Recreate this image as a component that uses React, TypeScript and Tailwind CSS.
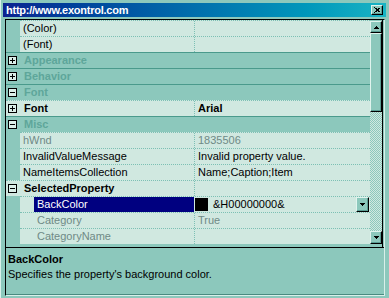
const FONT = "font-['Liberation_Sans',Arial,sans-serif]";

type Item =
  | { t: "cat"; name: string; open: boolean }
  | { t: "grp"; name: string; value?: string; open: boolean }
  | {
      t: "prop";
      name: string;
      value?: string;
      lvl: 1 | 2;
      gray?: boolean;
      sel?: boolean;
      swatch?: boolean;
    };

const rows: Item[] = [
  { t: "prop", name: "(Color)", lvl: 1 },
  { t: "prop", name: "(Font)", lvl: 1 },
  { t: "cat", name: "Appearance", open: false },
  { t: "cat", name: "Behavior", open: false },
  { t: "cat", name: "Font", open: true },
  { t: "grp", name: "Font", value: "Arial", open: false },
  { t: "cat", name: "Misc", open: true },
  { t: "prop", name: "hWnd", value: "1835506", lvl: 1, gray: true },
  { t: "prop", name: "InvalidValueMessage", value: "Invalid property value.", lvl: 1 },
  { t: "prop", name: "NameItemsCollection", value: "Name;Caption;Item", lvl: 1 },
  { t: "grp", name: "SelectedProperty", open: true },
  { t: "prop", name: "BackColor", value: "&H00000000&", lvl: 2, sel: true, swatch: true },
  { t: "prop", name: "Category", value: "True", lvl: 2, gray: true },
  { t: "prop", name: "CategoryName", lvl: 2, gray: true },
];

function Box({ open }: { open: boolean }) {
  return (
    <div className="w-[9px] h-[9px] border border-black bg-[#dcefe9] flex items-center justify-center shrink-0">
      <svg width="7" height="7" viewBox="0 0 7 7" shapeRendering="crispEdges">
        <rect x="1" y="3" width="5" height="1" fill="black" />
        {!open && <rect x="3" y="1" width="1" height="5" fill="black" />}
      </svg>
    </div>
  );
}

function Arrow({ up }: { up?: boolean }) {
  return (
    <svg width="5" height="3" viewBox="0 0 5 3" shapeRendering="crispEdges">
      {up ? (
        <polygon points="2.5,0 5,3 0,3" fill="black" />
      ) : (
        <polygon points="0,0 5,0 2.5,3" fill="black" />
      )}
    </svg>
  );
}

function Btn3d({ className, children }: { className: string; children?: React.ReactNode }) {
  return (
    <div
      className={
        "bg-[#8cc8bc] border border-t-[#e0f4ee] border-l-[#e0f4ee] border-r-black border-b-black shadow-[inset_-1px_-1px_0_#5a9c92] flex items-center justify-center shrink-0 " +
        className
      }
    >
      {children}
    </div>
  );
}

function GridRow({ r }: { r: Item }) {
  if (r.t === "cat") {
    return (
      <div className="h-[16px] flex items-center border-t border-[#4a9a8c] bg-[#8cc8bc]">
        <div className="ml-[2px]">
          <Box open={r.open} />
        </div>
        <span className="ml-[7px] font-bold text-[11px] text-[#5ea69a]">{r.name}</span>
      </div>
    );
  }
  if (r.t === "grp") {
    return (
      <div className="h-[16px] flex bg-[#d0e8e0] border-t border-dotted border-[#7cc0b4]">
        <div className="w-[188px] flex items-center">
          <div className="ml-[2px]">
            <Box open={r.open} />
          </div>
          <span className="ml-[7px] font-bold text-[11px] text-black">{r.name}</span>
        </div>
        <div className="flex-1 flex items-center border-l border-dotted border-[#7cc0b4] pl-[3px] font-bold text-[11px] text-black">
          {r.value}
        </div>
      </div>
    );
  }
  const txt = r.gray ? "text-[#6f8a86]" : "text-black";
  return (
    <div className="h-[16px] flex">
      <div className="w-[14px] bg-[#8cc8bc]" />
      <div className="flex-1 flex bg-[#d0e8e0] border-t border-dotted border-[#7cc0b4]">
        {r.lvl === 2 && <div className="w-[14px]" />}
        <div
          className={
            (r.lvl === 2 ? "w-[160px] " : "w-[174px] ") +
            "flex items-center pl-[3px] text-[11px] " +
            (r.sel ? "bg-[#000080] text-white" : txt)
          }
        >
          {r.name}
        </div>
        <div
          className={
            "flex-1 flex items-center text-[11px] " +
            txt +
            (r.sel ? "" : " border-l border-dotted border-[#7cc0b4] pl-[3px]")
          }
        >
          {r.swatch && <div className="w-[13px] h-[13px] bg-black ml-[1px]" />}
          <span className={r.swatch ? "ml-[5px]" : ""}>{r.value}</span>
          {r.sel && (
            <>
              <div className="flex-1" />
              <Btn3d className="w-[13px] h-[15px] mr-[1px]">
                <Arrow />
              </Btn3d>
            </>
          )}
        </div>
      </div>
    </div>
  );
}

export default function App() {
  return (
    <div
      className={
        "w-[389px] h-[298px] bg-[#8cc8bc] shadow-[inset_1px_0_0_#d8f0ea] pt-[3px] overflow-hidden " +
        FONT
      }
    >
      <div className="ml-[3px] w-[383px] h-[14px] flex items-center bg-linear-to-r from-[#0c2290] to-[#18b4c4]">
        <span className="ml-[3px] text-white font-bold text-[11px] tracking-[-0.25px] leading-none">
          http://www.exontrol.com
        </span>
        <div className="flex-1" />
        <Btn3d className="w-[12px] h-[10px] mr-[3px]">
          <svg width="7" height="6" viewBox="0 0 7 6" shapeRendering="crispEdges">
            <path d="M0.5 0.5 L6.5 5.5 M6.5 0.5 L0.5 5.5" stroke="black" strokeWidth="1.2" />
          </svg>
        </Btn3d>
      </div>

      <div className="ml-[5px] mt-[2px] w-[380px] h-[277px] border border-t-black border-l-black border-r-[#d8f0ea] border-b-[#d8f0ea] flex flex-col">
        <div className="h-[227px] flex">
          <div className="w-[364px] bg-[#8cc8bc] overflow-hidden">
            {rows.map((r, i) => (
              <GridRow key={i} r={r} />
            ))}
          </div>
          <div className="w-[12px] mt-[1px] h-[223px] flex flex-col">
            <Btn3d className="h-[12px] w-[12px]">
              <Arrow up />
            </Btn3d>
            <Btn3d className="h-[79px] w-[12px]" />
            <div className="flex-1 bg-[image:repeating-conic-gradient(#d0e8e0_0_25%,#8cc8bc_0_50%)] bg-[length:2px_2px]" />
            <Btn3d className="h-[13px] w-[12px]">
              <Arrow />
            </Btn3d>
          </div>
          <div className="w-[1px] bg-black" />
          <div className="w-[1px]" />
        </div>
        <div className="h-[1px] bg-black" />
        <div className="h-[46px] pl-[2px] pt-[4px] text-[11px] leading-[15px] text-black">
          <div className="font-bold">BackColor</div>
          <div>Specifies the property's background color.</div>
        </div>
        <div className="h-[1px] bg-[#4a8a80]" />
      </div>
    </div>
  );
}
